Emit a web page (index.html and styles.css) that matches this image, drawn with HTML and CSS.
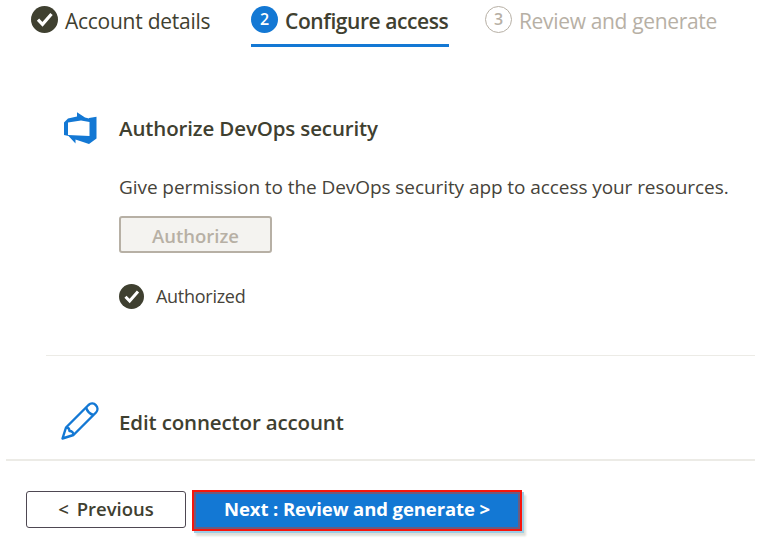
FILE: index.html
```
<!DOCTYPE html>
<html lang="en">
<head>
<meta charset="utf-8">
<title>Configure access</title>
<link rel="stylesheet" href="styles.css">
</head>
<body>
<nav class="tabs">
  <div class="tab tab-done">
    <svg class="tab-icon" viewBox="0 0 27 27"><circle cx="13.5" cy="13.5" r="13.5" fill="#3f4030"/><path d="M7 13.700l4.500 4.600 9-10.300" fill="none" stroke="#fff" stroke-width="3.200"/></svg>
    <span class="tab-label">Account details</span>
  </div>
  <div class="tab tab-active">
    <span class="tab-icon number number-active">2</span>
    <span class="tab-label">Configure access</span>
  </div>
  <div class="tab tab-next">
    <span class="tab-icon number number-next">3</span>
    <span class="tab-label">Review and generate</span>
  </div>
</nav>
<main class="content">
  <section class="step authorize-step">
    <svg class="step-icon" viewBox="0 0 36 36"><path fill="#1378d4" fill-rule="evenodd" d="M1 11.500L5 7.500l9-2V1.300L22 6.500l4 1V7l7.500-1.200V27.500L26 33l-13.500-4.500v4L5.500 25 1 24zM5 11.500V24l21.500 1V11l-8.500-1.500z"/></svg>
    <div class="step-body">
      <h2 class="step-title">Authorize DevOps security</h2>
      <p class="description">Give permission to the DevOps security app to access your resources.</p>
      <button class="button authorize" disabled>Authorize</button>
      <div class="status">
        <svg class="status-icon" viewBox="0 0 27 27"><circle cx="13.5" cy="13.5" r="13.5" fill="#3f4030"/><path d="M7 13.700l4.500 4.600 9-10.300" fill="none" stroke="#fff" stroke-width="3.200"/></svg>
        <span>Authorized</span>
      </div>
    </div>
  </section>
  <section class="step edit-step">
    <svg class="step-icon pencil" viewBox="0 0 38 38"><g fill="none" stroke="#1378d4" stroke-width="2.400" stroke-linejoin="round"><path d="M1.500 36.500L5 25.500 27.500 3c5-4.500 12 2.500 7.500 7.500L12.500 33z"/><path d="M25 5.500c1.500 4.500 3.500 6.500 7.500 7.500M5 25.500c2.500 0 3.500 1 3.500 3.500 2.500 0 4 1.500 4 4"/></g></svg>
    <h2 class="step-title edit-title">Edit connector account</h2>
  </section>
</main>
<footer class="footer">
  <button class="button previous">&lt; Previous</button>
  <button class="button next">Next : Review and generate &gt;</button>
</footer>
</body>
</html>
```
FILE: styles.css
```
* { box-sizing: border-box; }
body {
  margin: 0;
  height: 543px;
  overflow: hidden;
  display: flex;
  flex-direction: column;
  background: #fff;
  color: #3f4030;
  font-family: "Open Sans", "Noto Sans", sans-serif;
}
.tabs { display: flex; height: 47px; padding-left: 31px; flex: none; }
.tab { display: flex; padding-top: 6px; height: 47px; white-space: nowrap; }
.tab-done { width: 220px; }
.tab-active { width: 198px; border-bottom: 3px solid #1378d4; }
.tab-next { margin-left: 36px; color: #b7b0a5; }
.tab-icon { width: 27px; height: 27px; flex: none; }
.tab-label { margin-left: 7px; line-height: 31px; font-size: 21px; letter-spacing: -0.26px; }
.tab-active .tab-label { font-weight: 600; letter-spacing: -0.42px; }
.tab-next .tab-label { letter-spacing: -0.34px; }
.number { border-radius: 50%; text-align: center; font-size: 16px; line-height: 25px; }
.number-active { background: #1378d4; color: #fff; font-weight: 600; line-height: 27px; }
.number-next { border: 1px solid #b7b0a5; font-weight: 600; }
.content { flex: none; height: 412px; padding-left: 46px; }
.step { display: flex; margin-right: 5px; padding-left: 17px; }
.authorize-step { height: 309px; padding-top: 64px; border-bottom: 1px solid #ecebe6; }
.step-icon { width: 36px; height: 36px; flex: none; }
.step-body { margin-left: 20px; }
.step-title { margin: 0; font-size: 20.5px; font-weight: 600; line-height: 34px; letter-spacing: -0.14px; white-space: nowrap; }
.description { margin: 29px 0 0; font-size: 19px; line-height: 26px; letter-spacing: -0.075px; white-space: nowrap; color: #46433a; }
.button { padding: 0 0 2px; border-radius: 3px; font: 600 18.5px/30px "Open Sans", "Noto Sans", sans-serif; white-space: nowrap; }
.authorize { display: block; width: 153px; height: 37px; margin-top: 16px; padding: 2px 0 0; border: 2px solid #b7b0a5; background: #f4f3f0; color: #b7b0a5; }
.status { display: flex; align-items: center; margin-top: 30px; height: 26px; font-size: 18px; letter-spacing: -0.28px; color: #46433a; }
.status-icon { width: 25px; height: 25px; margin-right: 12px; }
.edit-step { padding: 45px 0 0 15px; }
.pencil { width: 38px; height: 38px; margin-top: 1px; }
.edit-title { margin: 4px 0 0 20px; }
.footer { flex: none; display: flex; gap: 6px; margin: 0 5px 0 6px; padding: 30px 0 0 20px; height: 84px; border-top: 2px solid #ecebe6; }
.previous { width: 160px; height: 37px; border: 1.5px solid #4e4852; background: #fff; color: #3f4030; word-spacing: 3px; }
.next { width: 330px; height: 41px; margin-top: -1px; padding-bottom: 3px; border: 2px solid #f7150c; border-radius: 0; background: #1378d4; box-shadow: inset 0 0 0 2px #6b5c80, 2px 2px 0 #9dcde6, 4px 5px 2px #dedfd8; color: #fff; font-weight: 700; letter-spacing: -0.1px; }
```
